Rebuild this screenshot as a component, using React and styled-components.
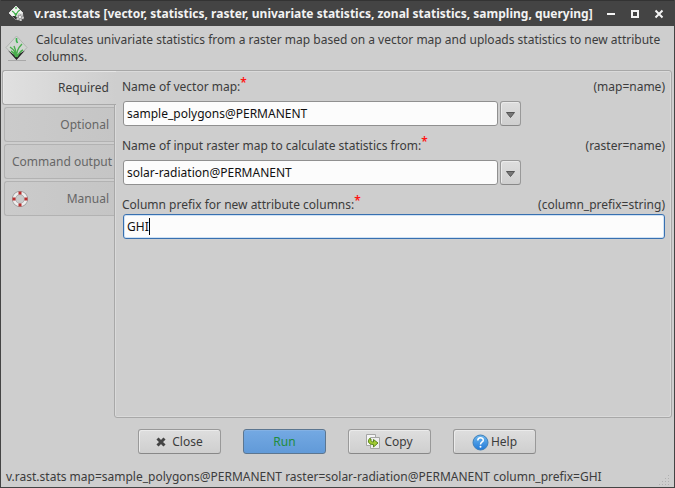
import React, { useState } from "react";
import styled, { createGlobalStyle, css } from "styled-components";

const GlobalStyle = createGlobalStyle`
  *, *::before, *::after { box-sizing: border-box; }
  body { margin: 0; background: #cecece; }
  body, button, input {
    font-family: "Noto Sans", sans-serif;
    font-size: 12px;
    line-height: 18px;
    color: #3c3c3c;
  }
`;

const Window = styled.div`
  display: flex;
  flex-direction: column;
  min-height: 100vh;
  background: #cecece;
  border: 1px solid #444;
  border-top: 0;
`;

const TitleBar = styled.header`
  display: flex;
  align-items: center;
  height: 26px;
  padding: 0 9px 0 7px;
  background: #444;
  border-top: 1px solid #333;
  color: #f2f2f2;
`;

const Title = styled.h1`
  flex: 1;
  min-width: 0;
  margin: 0 0 0 9px;
  font-size: 12px;
  line-height: 18px;
  font-weight: 700;
  white-space: nowrap;
`;

const WindowControls = styled.div`
  display: flex;
  gap: 12px;
`;

const ControlButton = styled.button`
  display: flex;
  width: 12px;
  height: 12px;
  padding: 0;
  border: 0;
  background: none;
`;

const Intro = styled.div`
  display: flex;
  gap: 7px;
  height: 44px;
  padding: 5px 10px 0 4px;
`;

const IntroIcon = styled.div`
  flex: none;
  width: 24px;
  padding-top: 3px;
`;

const IntroText = styled.p`
  margin: 0;
  line-height: 17px;
`;

const Notebook = styled.main`
  display: flex;
  flex: 1;
  margin: 0 2px 0 1px;
`;

const TabList = styled.nav`
  display: flex;
  flex-direction: column;
  gap: 2px;
  flex: none;
  width: 112px;
  z-index: 1;
`;

const Tab = styled.button`
  display: flex;
  align-items: center;
  justify-content: space-between;
  height: 35px;
  margin-left: 2px;
  padding: 0 5px 0 7px;
  border: 1px solid #b2b2b2;
  border-right: 0;
  border-radius: 3px 0 0 3px;
  background: linear-gradient(90deg, #cbcbcb, #c5c5c5);
  color: #666;
  white-space: nowrap;

  ${({ $active }) =>
    $active &&
    css`
      margin: 0 -2px 0 0;
      padding-right: 7px;
      border-color: #a8a8a8;
      background: linear-gradient(90deg, #e0e0e0, #cecece);
      box-shadow: inset 1px 1px #e6e6e6;
      color: #3c3c3c;
    `}
`;

const TabLabel = styled.span`
  margin-left: auto;
`;

const Panel = styled.section`
  display: flex;
  flex-direction: column;
  gap: 11px;
  flex: 1;
  min-width: 0;
  padding: 7px 6px 8px 8px;
  border: 1px solid #a8a8a8;
  border-radius: 0 3px 3px 3px;
  box-shadow: inset 1px 1px #dadada, inset -1px -1px #dadada;
`;

const Field = styled.div`
  display: flex;
  flex-direction: column;
  gap: ${({ $tight }) => ($tight ? 0 : 5)}px;
`;

const FieldHead = styled.div`
  display: flex;
  justify-content: space-between;
  height: 18px;
  margin-left: -1px;
`;

const Required = styled.span`
  display: inline-block;
  height: 18px;
  line-height: 10px;
  vertical-align: top;
  color: #ff1414;
  font-size: 12px;
  font-weight: 600;
`;

const Combo = styled.div`
  display: flex;
  gap: 2px;
  width: 73%;
  max-width: 600px;
  min-width: 398px;
`;

const TextField = styled.input`
  flex: 1;
  width: 100%;
  min-width: 0;
  height: 25px;
  padding: 0 4px 1px 3px;
  border: 1px solid #909090;
  border-radius: 3px;
  background: #fcfcfc;
  color: #111;
  outline: 0;

  ${({ $focused }) =>
    $focused &&
    css`
      border-color: #3870b0;
      box-shadow: inset 0 0 0 1px #cfe2f5;
    `}
`;

const FocusBox = styled.div`
  position: relative;
  display: flex;
`;

const Caret = styled.span`
  position: absolute;
  top: 4px;
  left: 26px;
  width: 1px;
  height: 17px;
  background: #000;
`;

const raised = css`
  border: 1px solid #999;
  border-bottom-color: #888;
  border-radius: 3px;
  background: linear-gradient(#dedede, #cfcfcf);
  box-shadow: inset 1px 1px #ebebeb;
`;

const DropButton = styled.button`
  ${raised}
  display: flex;
  align-items: center;
  justify-content: center;
  flex: none;
  width: 21px;
  padding: 2px 0 0;
`;

const Actions = styled.div`
  display: flex;
  justify-content: center;
  gap: 22px;
  padding: 11px 1px 0 0;
`;

const ActionButton = styled.button`
  ${raised}
  display: flex;
  align-items: center;
  justify-content: center;
  gap: ${({ $gap = 2 }) => $gap}px;
  width: 83px;
  height: 25px;
  padding: 1px 0 0;

  ${({ $primary }) =>
    $primary &&
    css`
      border-color: #5c7690;
      background: linear-gradient(#74a9e3, #619ad8);
      box-shadow: inset 0 1px #83b1e4;
      color: #218c3c;
    `}
`;

const StatusBar = styled.footer`
  display: flex;
  align-items: flex-end;
  justify-content: space-between;
  height: 33px;
  padding: 0 3px 1px 5px;
  white-space: nowrap;
`;

const Icon = styled.svg`
  display: block;
  flex: none;
`;

const GrassIcon = () => (
  <Icon width="24" height="28" viewBox="0 0 24 28" aria-hidden="true">
    <path d="M3 26.500h18" stroke="#a8a8a8" />
    <path d="M11.500 2 22 13.500 11.500 25 1 13.500Z" fill="#d2d6d2" stroke="#b0b3b0" />
    <path d="M3 16.500 8 20l3 2 3-2 6-3.500-8.500 9.500Z" fill="#222" />
    <path d="M11 23C11 18 8 15 5 13M11 23C10 20 8 18 6 17M12 23C11 18 13 14 17 10M12 23C14 19 16 17 18 16M11 21C11 17 10 14 9 12" fill="none" stroke="#49ad4c" strokeWidth="1.400" />
    <path d="M11.500 4v3l1 2" stroke="#35b34a" strokeWidth="1.600" fill="none" />
  </Icon>
);

const AppIcon = () => (
  <Icon width="17" height="17" viewBox="0 0 17 17" aria-hidden="true">
    <path d="M8 1 15 8 8 15 1 8Z" fill="#f1f3f1" stroke="#ddd" />
    <path d="M8 14C8 9 6 7 4 6M8 13C8 8 10 6 12 5M8 2v2M8 8v5" fill="none" stroke="#3fae49" strokeWidth="1.200" />
    <path d="m4 11 4 4 2-2-3-2Z" fill="#333" />
    <circle cx="12" cy="12" r="3" fill="#999" stroke="#ccc" strokeWidth="2" strokeDasharray="2 1" />
    <circle cx="12" cy="12" r="1.200" fill="#eee" />
  </Icon>
);

const LifebuoyIcon = () => (
  <Icon width="16" height="16" viewBox="0 0 16 16" aria-hidden="true">
    <circle cx="8" cy="8" r="6" fill="none" stroke="#999" strokeWidth="4" />
    <circle cx="8" cy="8" r="6" fill="none" stroke="#eee" strokeWidth="2.600" />
    <path d="M6.500 2h3M6.500 14h3M2 6.500v3M14 6.500v3" stroke="#b92f2f" strokeWidth="3" />
  </Icon>
);

const ArrowIcon = () => (
  <Icon width="9" height="6" viewBox="0 0 9 6" aria-hidden="true">
    <path d="M.5.500h8L4.500 5.500Z" fill="#777" stroke="#555" />
  </Icon>
);

const CrossIcon = () => (
  <Icon width="10" height="10" viewBox="0 0 10 10" aria-hidden="true">
    <path d="m1.500 1.500 7 7m0-7-7 7" stroke="#444" strokeWidth="3" />
  </Icon>
);

const CopyIcon = () => (
  <Icon width="15" height="16" viewBox="0 0 15 16" aria-hidden="true">
    <path d="M.5.500h9v11h-9z" fill="#f4f4f4" stroke="#a5a5a5" />
    <path d="M4.500 3.500h9v11h-9z" fill="#eee" stroke="#a5a5a5" />
    <path d="M3.500 4.500C1 8 3 10.500 7.500 10.500V13L12 9 7.500 5.500V8C5.500 8 4.500 7 5 5Z" fill="#a3cc32" stroke="#5b861e" />
  </Icon>
);

const HelpIcon = () => (
  <Icon width="17" height="17" viewBox="0 0 17 17" aria-hidden="true">
    <defs>
      <linearGradient id="helpFill" x2="0" y2="1">
        <stop stopColor="#6fb8ee" />
        <stop offset="1" stopColor="#2179d8" />
      </linearGradient>
    </defs>
    <circle cx="8.500" cy="8.500" r="7.500" fill="url(#helpFill)" stroke="#3f7fb8" />
    <path d="M5.800 6.500C5.800 3 11.300 3 11.300 6.200 11.300 8 8.500 8 8.500 10.500" fill="none" stroke="#fff" strokeWidth="1.500" />
    <circle cx="8.500" cy="12.800" r="1" fill="#fff" />
  </Icon>
);

const GripIcon = () => (
  <Icon width="12" height="12" viewBox="0 0 12 12" aria-hidden="true">
    <path d="M9 1.500h1M6 4.500h1m2 0h1M3 7.500h1m2 0h1m2 0h1M0 10.500h1m2 0h1m2 0h1m2 0h1" stroke="#b0b0b0" />
  </Icon>
);

const TABS = ["Required", "Optional", "Command output", "Manual"];

const FieldLabel = ({ id, text, hint }) => (
  <FieldHead>
    <label htmlFor={id}>
      {text}
      <Required>*</Required>
    </label>
    <span>{hint}</span>
  </FieldHead>
);

const ComboField = ({ id, text, hint, initial }) => {
  const [value, setValue] = useState(initial);
  return (
    <Field>
      <FieldLabel id={id} text={text} hint={hint} />
      <Combo>
        <TextField id={id} value={value} onChange={(e) => setValue(e.target.value)} />
        <DropButton type="button" aria-label={`Choose: ${text}`}>
          <ArrowIcon />
        </DropButton>
      </Combo>
    </Field>
  );
};

export default function App() {
  const [tab, setTab] = useState("Required");
  const [prefix, setPrefix] = useState("GHI");
  return (
    <>
      <GlobalStyle />
      <Window>
        <TitleBar>
          <AppIcon />
          <Title>v.rast.stats [vector, statistics, raster, univariate statistics, zonal statistics, sampling, querying]</Title>
          <WindowControls>
            <ControlButton type="button" aria-label="Minimize">
              <Icon width="12" height="12" viewBox="0 0 12 12"><path d="M2 6h8" stroke="#f4f4f4" strokeWidth="2" /></Icon>
            </ControlButton>
            <ControlButton type="button" aria-label="Maximize">
              <Icon width="12" height="12" viewBox="0 0 12 12"><path d="M3 3h6v6H3z" fill="none" stroke="#f4f4f4" strokeWidth="2" /></Icon>
            </ControlButton>
            <ControlButton type="button" aria-label="Close window">
              <Icon width="12" height="12" viewBox="0 0 12 12"><path d="m2.500 2.500 7 7m0-7-7 7" stroke="#f4f4f4" strokeWidth="2" /></Icon>
            </ControlButton>
          </WindowControls>
        </TitleBar>
        <Intro>
          <IntroIcon><GrassIcon /></IntroIcon>
          <IntroText>
            Calculates univariate statistics from a raster map based on a vector map and uploads statistics to new attribute columns.
          </IntroText>
        </Intro>
        <Notebook>
          <TabList>
            {TABS.map((name) => (
              <Tab key={name} type="button" $active={tab === name} onClick={() => setTab(name)}>
                {name === "Manual" && <LifebuoyIcon />}
                <TabLabel>{name}</TabLabel>
              </Tab>
            ))}
          </TabList>
          <Panel>
            <ComboField id="map" text="Name of vector map:" hint="(map=name)" initial="sample_polygons@PERMANENT" />
            <ComboField
              id="raster"
              text="Name of input raster map to calculate statistics from:"
              hint="(raster=name)"
              initial="solar-radiation@PERMANENT"
            />
            <Field $tight>
              <FieldLabel id="prefix" text="Column prefix for new attribute columns:" hint="(column_prefix=string)" />
              <FocusBox>
                <TextField id="prefix" $focused value={prefix} onChange={(e) => setPrefix(e.target.value)} />
                <Caret />
              </FocusBox>
            </Field>
          </Panel>
        </Notebook>
        <Actions>
          <ActionButton type="button" $gap={6}><CrossIcon />Close</ActionButton>
          <ActionButton type="button" $primary>Run</ActionButton>
          <ActionButton type="button" $gap={3}><CopyIcon />Copy</ActionButton>
          <ActionButton type="button"><HelpIcon />Help</ActionButton>
        </Actions>
        <StatusBar>
          <span>v.rast.stats map=sample_polygons@PERMANENT raster=solar-radiation@PERMANENT column_prefix=GHI</span>
          <GripIcon />
        </StatusBar>
      </Window>
    </>
  );
}
